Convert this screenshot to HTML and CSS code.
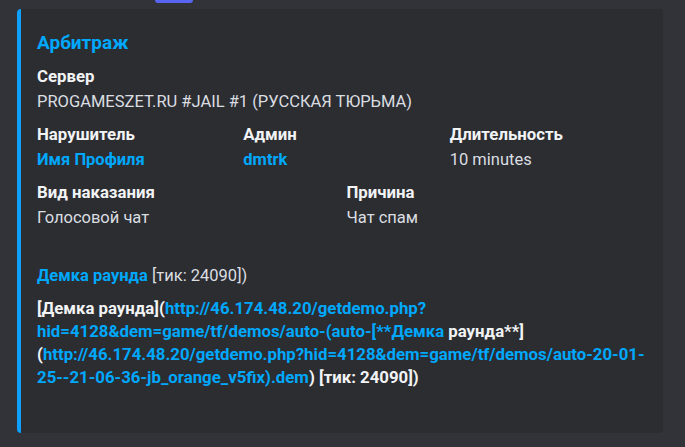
FILE: index.html
```html
<!DOCTYPE html>
<html lang="ru">
<head>
<meta charset="utf-8">
<title>Арбитраж</title>
<link rel="stylesheet" href="styles.css">
</head>
<body>
<div class="notch"></div>
<article class="embed">
  <div class="title">Арбитраж</div>
  <div class="fields">
    <div class="field span12">
      <div class="fname">Сервер</div>
      <div class="fvalue">PROGAMESZET.RU #JAIL #1 (РУССКАЯ ТЮРЬМА)</div>
    </div>
    <div class="field span4">
      <div class="fname">Нарушитель</div>
      <div class="fvalue"><span class="link bold">Имя Профиля</span></div>
    </div>
    <div class="field span4">
      <div class="fname">Админ</div>
      <div class="fvalue"><span class="link bold">dmtrk</span></div>
    </div>
    <div class="field span4">
      <div class="fname">Длительность</div>
      <div class="fvalue">10 minutes</div>
    </div>
    <div class="field span6">
      <div class="fname">Вид наказания</div>
      <div class="fvalue">Голосовой чат</div>
    </div>
    <div class="field span6">
      <div class="fname">Причина</div>
      <div class="fvalue">Чат спам</div>
    </div>
    <div class="field span12">
      <div class="fname empty"></div>
      <div class="fvalue"><span class="link bold">Демка раунда</span> [тик: 24090])</div>
    </div>
    <div class="field span12">
      <div class="fname long">[Демка раунда](<span class="link">http://46.174.48.20/getdemo.php?</span><br><span class="link">hid=4128&amp;dem=game/tf/demos/auto-(auto-[**Демка</span> раунда**]<br>(<span class="link">http://46.174.48.20/getdemo.php?hid=4128&amp;dem=game/tf/demos/auto-20-01-</span><br><span class="link">25--21-06-36-jb_orange_v5fix).dem</span>) [тик: 24090])</div>
    </div>
  </div>
</article>
</body>
</html>
```
FILE: styles.css
```css
html, body {
  margin: 0;
  padding: 0;
}
body {
  background: #313338;
  width: 685px;
  height: 447px;
  overflow: hidden;
  font-family: Roboto, "Noto Sans", "Liberation Sans", sans-serif;
  font-size: 16.5px;
  color: #dbdee1;
}
.notch {
  margin-left: 155px;
  width: 38px;
  height: 3px;
  background: #5865f2;
  border-radius: 0 0 3px 3px;
}
.embed {
  margin: 6px 0 0 17px;
  width: 646px;
  box-sizing: border-box;
  background: #2b2d31;
  border-left: 4px solid #0ea0fb;
  border-radius: 4px;
  padding: 21px 18px 42px 16px;
}
.title {
  font-size: 19px;
  font-weight: 700;
  line-height: 26px;
  color: #00a8fc;
}
.fields {
  margin-top: 9px;
  width: 611px;
  display: grid;
  grid-template-columns: repeat(12, 1fr);
  column-gap: 8px;
  row-gap: 10px;
}
.span12 { grid-column: span 12; }
.span6 { grid-column: span 6; }
.span4 { grid-column: span 4; }
.fname {
  font-size: 16.8px;
  font-weight: 700;
  color: #f2f3f5;
  line-height: 23px;
  margin-bottom: 2px;
}
.fname.empty {
  height: 23px;
}
.fname.long {
  white-space: nowrap;
}
.fvalue {
  line-height: 23px;
  color: #dbdee1;
}
.link {
  color: #00a8fc;
}
.bold {
  font-weight: 700;
}
```
